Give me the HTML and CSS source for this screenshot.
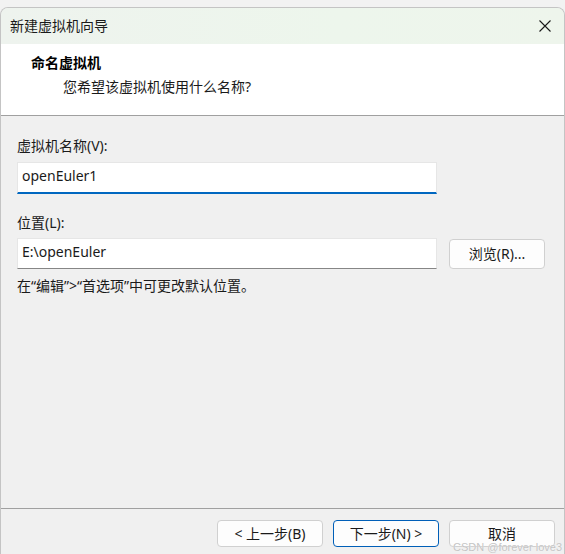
FILE: index.html
```html
<!DOCTYPE html>
<html>
<head>
<meta charset="utf-8">
<link rel="stylesheet" href="styles.css">
</head>
<body>
<div class="window">
  <div class="titlebar">
    <span class="title">新建虚拟机向导</span>
    <svg class="close" width="12" height="12" viewBox="0 0 12 12"><path d="M0.5 0.5L11.5 11.5M11.5 0.5L0.5 11.5" stroke="#1a1a1a" stroke-width="1.1" fill="none"/></svg>
  </div>
  <div class="header">
    <div class="h-title">命名虚拟机</div>
    <div class="h-sub">您希望该虚拟机使用什么名称?</div>
  </div>
  <div class="content">
    <div class="label label-first">虚拟机名称(V):</div>
    <div class="input input-focus">openEuler1</div>
    <div class="label label-second">位置(L):</div>
    <div class="row">
      <div class="input input-plain">E:\openEuler</div>
      <div class="btn btn-browse">浏览(R)...</div>
    </div>
    <div class="hint">在“编辑”&gt;“首选项”中可更改默认位置。</div>
  </div>
  <div class="footer">
    <div class="btn">&lt; 上一步(B)</div>
    <div class="btn btn-default">下一步(N) &gt;</div>
    <div class="btn">取消</div>
    <span class="watermark">CSDN @forever love3</span>
  </div>
</div>
</body>
</html>
```

FILE: styles.css
```css
html, body {
  margin: 0;
  padding: 0;
}
body {
  background: #f2f2f2;
  width: 565px;
  height: 554px;
  overflow: hidden;
  font-family: "Noto Sans", "Noto Sans CJK SC", sans-serif;
  font-size: 14px;
  color: #1a1a1a;
}
.window {
  margin-top: 7px;
  height: 547px;
  box-sizing: border-box;
  border: 1px solid #c4c4c4;
  border-bottom: none;
  border-radius: 8px 8px 0 0;
  background: #f0f0f0;
  display: flex;
  flex-direction: column;
  overflow: hidden;
  position: relative;
}
.titlebar {
  height: 36px;
  background: linear-gradient(90deg, #eef3ee 0%, #edf6ec 60%, #eef5ec 100%);
  display: flex;
  align-items: center;
  justify-content: space-between;
  padding: 0 12px 0 9px;
}
.title {
  font-size: 14px;
  color: #1a1a1a;
  line-height: 20px;
  margin-top: -1px;
}
.close {
  margin-right: 1px;
}
.header {
  background: #ffffff;
  height: 72px;
  box-sizing: border-box;
  padding: 9px 0 0 30px;
  border-bottom: 1px solid #a0a0a0;
}
.h-title {
  font-weight: bold;
  line-height: 20px;
  font-size: 14px;
  color: #000;
}
.h-sub {
  line-height: 20px;
  margin-top: 4px;
  padding-left: 32px;
  color: #1a1a1a;
}
.content {
  flex: 1;
  padding: 20px 0 0 16px;
  border-bottom: 1px solid #a0a0a0;
}
.label {
  line-height: 20px;
}
.label-first {
  margin-bottom: 6px;
}
.label-second {
  margin-top: 19px;
  margin-bottom: 5px;
}
.input {
  width: 420px;
  box-sizing: border-box;
  background: #ffffff;
  border: 1px solid #e6e6e6;
  border-bottom: 1px solid #868686;
  height: 31px;
  line-height: 26px;
  padding-left: 4px;
  color: #1a1a1a;
}
.input-focus {
  height: 32px;
  border-bottom: 2px solid #0067c0;
}
.row {
  display: flex;
  align-items: center;
  gap: 12px;
}
.btn {
  width: 106px;
  height: 27px;
  box-sizing: border-box;
  background: #fdfdfd;
  border: 1px solid #d0d0d0;
  border-radius: 4px;
  display: flex;
  align-items: center;
  justify-content: center;
  line-height: 20px;
  color: #1a1a1a;
}
.btn-browse {
  width: 96px;
  height: 30px;
}
.btn-default {
  border-color: #005fb8;
}
.hint {
  line-height: 20px;
  margin-top: 7px;
}
.footer {
  height: 45px;
  box-sizing: border-box;
  padding: 11px 9px 0 0;
  display: flex;
  justify-content: flex-end;
  gap: 10px;
  position: relative;
}
.watermark {
  position: absolute;
  right: 2px;
  bottom: 1px;
  font-family: "Liberation Sans", sans-serif;
  font-size: 11px;
  line-height: 11px;
  color: #c4c4c4;
  text-shadow: 0 0 1px #ffffff;
}
```
